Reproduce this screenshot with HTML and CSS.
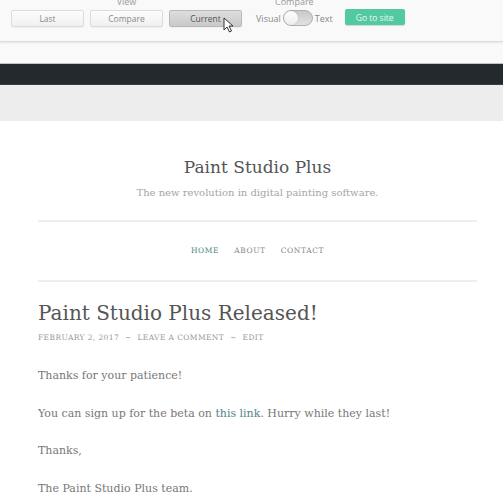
FILE: index.html
```html
<!DOCTYPE html>
<html>
<head>
<meta charset="utf-8">
<link rel="stylesheet" href="styles.css">
</head>
<body>
<div class="toolbar">
  <div class="group view-group">
    <div class="group-label">View</div>
    <div class="btn-row">
      <button class="btn">Last</button>
      <button class="btn">Compare</button>
      <button class="btn btn-active">Current
        <svg class="cursor" width="11" height="16" viewBox="0 0 11 16"><path d="M1 1 L1 13 L4 10 L6.5 15 L8.5 14 L6 9 L10 9 Z" fill="#fff" stroke="#333" stroke-width="1" stroke-linejoin="round"/></svg>
      </button>
    </div>
  </div>
  <div class="group compare-group">
    <div class="group-label">Compare</div>
    <div class="switch-row">
      <span class="switch-text">Visual</span>
      <span class="switch"><span class="knob"></span></span>
      <span class="switch-text">Text</span>
    </div>
  </div>
  <button class="go-btn">Go to site</button>
</div>
<div class="toolbar-gap"></div>
<div class="adminbar"></div>
<div class="greyband"></div>
<div class="site">
  <header class="site-header">
    <h1 class="site-title">Paint Studio Plus</h1>
    <p class="site-desc">The new revolution in digital painting software.</p>
  </header>
  <nav class="site-nav">
    <a class="nav-item nav-current">Home</a>
    <a class="nav-item">About</a>
    <a class="nav-item">Contact</a>
  </nav>
  <article class="post">
    <h2 class="post-title">Paint Studio Plus Released!</h2>
    <div class="post-meta">February 2, 2017 <span class="sep">~</span> Leave a comment <span class="sep">~</span> Edit</div>
    <p class="post-p">Thanks for your patience!</p>
    <p class="post-p">You can sign up for the beta on <a class="link">this link</a>. Hurry while they last!</p>
    <p class="post-p">Thanks,</p>
    <p class="post-p">The Paint Studio Plus team.</p>
  </article>
</div>
</body>
</html>
```
FILE: styles.css
```css
html, body {
  margin: 0;
  padding: 0;
  background: #fff;
  overflow: hidden;
}
.toolbar {
  height: 41px;
  background: #f9f9f9;
  border-bottom: 1px solid #dcdcdc;
  box-shadow: 0 1px 2px rgba(0,0,0,0.08);
  display: flex;
  align-items: flex-start;
  padding-left: 11px;
  font-family: "Open Sans", "DejaVu Sans", sans-serif;
  position: relative;
  z-index: 1;
}
.group {
  display: flex;
  flex-direction: column;
  align-items: center;
}
.group-label {
  font-size: 9px;
  line-height: 10px;
  margin-top: -3px;
  color: #999;
}
.btn-row {
  display: flex;
  gap: 6px;
  margin-top: 3px;
}
.btn {
  width: 73px;
  height: 17px;
  padding: 0;
  border: 1px solid #dcdcdc;
  border-radius: 2px;
  background: linear-gradient(#fdfdfd, #f0f0f0);
  color: #8a8a8a;
  font-family: "Open Sans", "DejaVu Sans", sans-serif;
  font-size: 8.5px;
  line-height: 15px;
  position: relative;
  box-shadow: 0 1px 1px rgba(0,0,0,0.04);
}
.btn-active {
  background: linear-gradient(#dedede, #c9c9c9);
  border-color: #b9b9b9;
  color: #555;
}
.cursor {
  position: absolute;
  left: 53px;
  top: 6px;
}
.compare-group {
  margin-left: 14px;
}
.switch-row {
  display: flex;
  align-items: center;
  margin-top: 3px;
  height: 16px;
  gap: 2px;
}
.switch-text {
  font-size: 9px;
  color: #888;
}
.switch {
  width: 30px;
  height: 16px;
  box-sizing: border-box;
  border-radius: 8px;
  border: 1px solid #b0b0b0;
  background: linear-gradient(#c8c8c8, #e2e2e2);
  position: relative;
  display: block;
}
.knob {
  position: absolute;
  left: 0;
  top: 0;
  width: 14px;
  height: 14px;
  border-radius: 50%;
  background: linear-gradient(#ffffff, #ececec);
  box-shadow: 0 0 1px rgba(0,0,0,0.4);
}
.go-btn {
  margin-left: 12px;
  margin-top: 9px;
  width: 60px;
  height: 16px;
  padding: 0;
  border: none;
  border-radius: 2px;
  background: #52c9a0;
  color: #eafaf3;
  font-family: "Open Sans", "DejaVu Sans", sans-serif;
  font-size: 8.5px;
  line-height: 15px;
  box-shadow: 0 1px 1px rgba(0,0,0,0.15);
}
.toolbar-gap {
  height: 21px;
  background: #f9f9f9;
  border-bottom: 1px solid #c4c4c4;
}
.adminbar {
  height: 20px;
  background: #23292c;
  border-bottom: 1px solid #3a3f42;
}
.greyband {
  height: 36px;
  background: #ededed;
}
.site {
  padding: 0 26px 0 38px;
  font-family: "DejaVu Serif", "Liberation Serif", serif;
}
.site-header {
  text-align: center;
  padding-top: 34px;
  padding-bottom: 19px;
  border-bottom: 2px solid #eeeeee;
}
.site-title {
  margin: 0;
  font-size: 17px;
  line-height: 24px;
  font-weight: normal;
  color: #555;
}
.site-desc {
  margin: 6px 0 0;
  font-size: 10px;
  line-height: 16px;
  color: #a5a5a5;
}
.site-nav {
  display: flex;
  justify-content: center;
  gap: 15px;
  padding: 23px 0;
  border-bottom: 2px solid #eeeeee;
  font-size: 7.5px;
  line-height: 12px;
  letter-spacing: 0.6px;
  text-transform: uppercase;
}
.nav-item {
  color: #888;
}
.nav-current {
  color: #4f8585;
}
.post-title {
  margin: 16px 0 0;
  font-size: 20px;
  line-height: 30px;
  font-weight: normal;
  color: #555;
}
.post-meta {
  margin-top: 4px;
  font-size: 7.5px;
  line-height: 12px;
  letter-spacing: 0.4px;
  text-transform: uppercase;
  color: #999;
}
.sep {
  margin: 0 3px;
}
.post-p {
  margin: 0 0 17.5px;
  font-size: 11px;
  line-height: 20px;
  color: #777;
}
.post-meta + .post-p {
  margin-top: 22px;
}
.link {
  color: #4f8585;
}
```
